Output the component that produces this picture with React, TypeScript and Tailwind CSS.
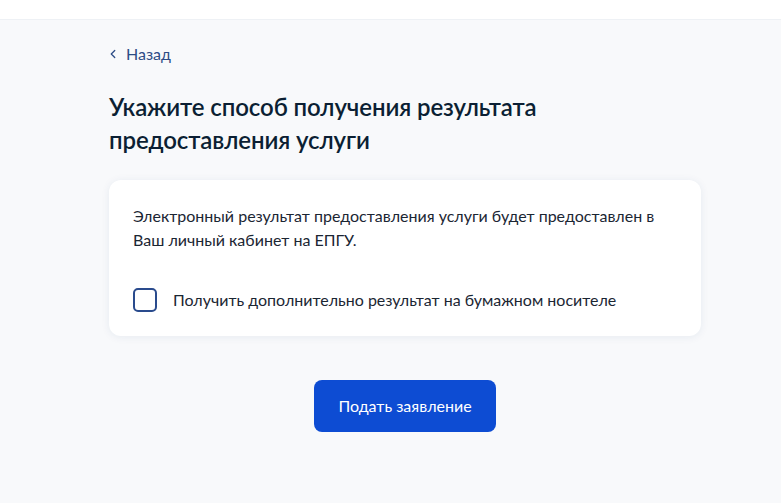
import { ChevronLeft } from 'lucide-react'

export default function App() {
  return (
    <div className="min-h-[503px] bg-[#f8f9fb] text-[#0b1f33]" style={{ fontFamily: 'Lato, "Noto Sans", sans-serif' }}>
      {/* Header strip */}
      <header className="h-5 bg-white border-b border-[#eef1f5]" />

      <main className="ml-[109px] w-[592px] flex flex-col">
        <a href="#" className="mt-[24px] flex items-center gap-[6px] text-[16px] leading-5 text-[#2d4c86]">
          <ChevronLeft className="h-[14px] w-[14px] -ml-[3px]" strokeWidth={2.2} />
          <span>Назад</span>
        </a>

        <h1 className="mt-[26px] text-[24px] leading-[33px] font-semibold tracking-[-0.1px] text-[#0b1f33]">
          Укажите способ получения результата
          <br />
          предоставления услуги
        </h1>

        <section className="mt-[24px] rounded-xl bg-white px-6 py-6 shadow-[0_1px_8px_rgba(30,60,110,0.08)]">
          <p className="text-[16px] leading-6 text-[#1b2633]">
            Электронный результат предоставления услуги будет предоставлен в
            <br />
            Ваш личный кабинет на ЕПГУ.
          </p>
          <label className="mt-9 flex items-center gap-4 cursor-pointer">
            <span className="h-6 w-6 shrink-0 rounded-[5px] border-2 border-[#2a4b8d] bg-white" />
            <span className="text-[16px] leading-6 text-[#1b2633]">Получить дополнительно результат на бумажном носителе</span>
          </label>
        </section>

        <div className="mt-11 flex justify-center">
          <button className="h-[52px] w-[182px] rounded-lg bg-[#0d4cd3] text-[16px] text-white">
            Подать заявление
          </button>
        </div>
      </main>
    </div>
  )
}
